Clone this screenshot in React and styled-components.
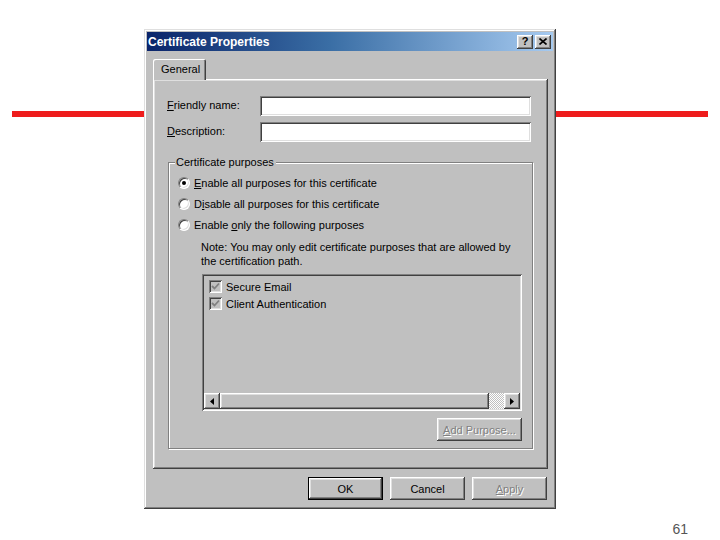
import React from "react";
import styled, { createGlobalStyle } from "styled-components";

// ===== global =====
const GlobalStyle = createGlobalStyle`
  html, body {
    margin: 0;
    padding: 0;
    background: #ffffff;
  }
  body {
    font-family: "Liberation Sans", Arial, sans-serif;
  }
`;

// ===== bevels =====
const raised = `
  box-shadow: inset -1px -1px #404040, inset 1px 1px #ffffff,
    inset -2px -2px #808080, inset 2px 2px #dfdfdf;
`;
const sunken = `
  box-shadow: inset 1px 1px #808080, inset -1px -1px #ffffff,
    inset 2px 2px #404040, inset -2px -2px #dfdfdf;
`;

// ===== slide =====
const Slide = styled.div`
  position: relative;
  width: 720px;
  height: 540px;
  overflow: hidden;
  background: #ffffff;
  display: flex;
  flex-direction: column;
`;
const RedRule = styled.div`
  position: absolute;
  top: 111px;
  left: 12px;
  width: 696px;
  height: 6px;
  background: #ee1c1c;
`;
const PageNumber = styled.div`
  align-self: flex-end;
  margin: 12px 32px 0 0;
  font-size: 14px;
  color: #555555;
`;

// ===== window =====
const Dialog = styled.div`
  position: relative;
  z-index: 1;
  box-sizing: border-box;
  margin: 29px 0 0 144px;
  width: 412px;
  height: 480px;
  padding: 3px;
  background: #c0c0c0;
  font-size: 11px;
  color: #000000;
  box-shadow: inset -1px -1px #404040, inset 1px 1px #dfdfdf,
    inset -2px -2px #808080, inset 2px 2px #ffffff;
  display: flex;
  flex-direction: column;
`;
const TitleBar = styled.div`
  height: 19px;
  padding: 0 2px 0 1px;
  display: flex;
  align-items: center;
  justify-content: space-between;
  background: linear-gradient(to right, #0a246a 0%, #3a6ea5 45%, #a6caf0 100%);
  color: #ffffff;
  font-weight: bold;
  font-size: 12px;
`;
const CaptionButtons = styled.div`
  display: flex;
  gap: 2px;
`;
const CaptionButton = styled.div`
  box-sizing: border-box;
  width: 16px;
  height: 14px;
  background: #c0c0c0;
  ${raised}
  display: flex;
  align-items: center;
  justify-content: center;
  color: #000000;
  font-weight: bold;
  font-size: 11px;
  line-height: 1;
`;
const Body = styled.div`
  flex: 1;
  padding: 8px 5px 0 6px;
  display: flex;
  flex-direction: column;
`;
const TabStrip = styled.div`
  display: flex;
  height: 20px;
`;
const Tab = styled.div`
  position: relative;
  z-index: 2;
  box-sizing: border-box;
  width: 53px;
  height: 21px;
  padding: 4px 0 0 8px;
  background: #c0c0c0;
  border-radius: 2px 2px 0 0;
  box-shadow: inset 1px 1px #ffffff, inset -1px 0 #404040, inset -2px 0 #808080;
`;
const TabPanel = styled.div`
  box-sizing: border-box;
  height: 390px;
  padding: 17px 17px 0 14px;
  background: #c0c0c0;
  ${raised}
  display: flex;
  flex-direction: column;
`;
const FieldRow = styled.div`
  display: flex;
  align-items: center;
  margin-bottom: 6px;
`;
const Label = styled.div`
  width: 93px;
  margin-top: -2px;
`;
const TextField = styled.div`
  box-sizing: border-box;
  flex: 1;
  height: 20px;
  background: #ffffff;
  ${sunken}
`;
const GroupBox = styled.fieldset`
  box-sizing: border-box;
  margin: 8px 0 0 1px;
  padding: 4px 10px 0 9px;
  height: 293px;
  border: 1px solid #808080;
  box-shadow: 1px 1px 0 #ffffff, inset 1px 1px 0 #ffffff;
  display: flex;
  flex-direction: column;
`;
const Legend = styled.legend`
  padding: 0 2px 0 1px;
  margin-left: -3px;
  background: #c0c0c0;
`;
const RadioRow = styled.div`
  display: flex;
  align-items: center;
  gap: 4px;
  height: 21px;
`;
const RadioDot = styled.div`
  box-sizing: border-box;
  width: 12px;
  height: 12px;
  border-radius: 50%;
  background: #ffffff;
  border: 1px solid;
  border-color: #808080 #ffffff #ffffff #808080;
  box-shadow: inset 1px 1px #404040, inset -1px -1px #dfdfdf;
  display: flex;
  align-items: center;
  justify-content: center;
  &::after {
    content: "";
    width: 4px;
    height: 4px;
    border-radius: 50%;
    background: ${(props) => (props.checked ? "#000000" : "transparent")};
  }
`;
const Note = styled.div`
  margin: 5px 0 0 23px;
  line-height: 14px;
`;
const ListBox = styled.div`
  box-sizing: border-box;
  margin: 6px 0 0 24px;
  width: 320px;
  height: 137px;
  padding: 4px 2px 2px 2px;
  background: #c0c0c0;
  ${sunken}
  display: flex;
  flex-direction: column;
`;
const CheckRow = styled.div`
  display: flex;
  align-items: center;
  gap: 4px;
  height: 17px;
  padding-left: 5px;
`;
const CheckBox = styled.div`
  box-sizing: border-box;
  width: 13px;
  height: 13px;
  background: #c0c0c0;
  ${sunken}
  display: flex;
  align-items: center;
  justify-content: center;
`;
const ListSpacer = styled.div`
  flex: 1;
`;
const ScrollBar = styled.div`
  display: flex;
  height: 16px;
`;
const ScrollArrow = styled.div`
  box-sizing: border-box;
  width: 16px;
  height: 16px;
  background: #c0c0c0;
  ${raised}
  display: flex;
  align-items: center;
  justify-content: center;
`;
const ScrollThumb = styled.div`
  box-sizing: border-box;
  flex: 1;
  background: #c0c0c0;
  ${raised}
`;
const ScrollTrack = styled.div`
  width: 15px;
  background-color: #c0c0c0;
  background-image: repeating-conic-gradient(#ffffff 0 25%, #c0c0c0 0 50%);
  background-size: 2px 2px;
`;
const GroupFooter = styled.div`
  display: flex;
  justify-content: flex-end;
  margin: 7px 0 0 0;
`;
const PushButton = styled.div`
  box-sizing: border-box;
  width: ${(props) => props.width || "75px"};
  height: 23px;
  background: #c0c0c0;
  display: flex;
  align-items: center;
  justify-content: center;
  color: ${(props) => (props.disabled ? "#808080" : "#000000")};
  text-shadow: ${(props) => (props.disabled ? "1px 1px 0 #ffffff" : "none")};
  ${(props) =>
    props.isDefault
      ? `border: 1px solid #000000;
         box-shadow: inset -1px -1px #404040, inset 1px 1px #ffffff,
           inset -2px -2px #808080, inset 2px 2px #dfdfdf;`
      : raised}
`;
const ButtonRow = styled.div`
  display: flex;
  justify-content: flex-end;
  gap: 7px;
  margin-top: 8px;
  padding-right: 1px;
`;

// ===== icons =====
const CloseGlyph = () => (
  <svg width="8" height="7" viewBox="0 0 8 7">
    <path d="M0.5 0.5 L7.5 6.5 M7.5 0.5 L0.5 6.5" stroke="#000" strokeWidth="1.6" />
  </svg>
);
const CheckGlyph = () => (
  <svg width="9" height="9" viewBox="0 0 9 9">
    <path d="M1 4 L3.5 6.5 L8 1.5" stroke="#808080" strokeWidth="1.8" fill="none" />
  </svg>
);
const Arrow = ({ dir }) => (
  <svg width="4" height="7" viewBox="0 0 4 7">
    <path d={dir === "left" ? "M4 0 L0 3.5 L4 7 Z" : "M0 0 L4 3.5 L0 7 Z"} fill="#000" />
  </svg>
);

// ===== component =====
const App = () => {
  const purposes = ["Secure Email", "Client Authentication"];

  return (
    <>
      <GlobalStyle />
      <Slide>
        <RedRule />
        <Dialog>
          <TitleBar>
            <span>Certificate Properties</span>
            <CaptionButtons>
              <CaptionButton>?</CaptionButton>
              <CaptionButton>
                <CloseGlyph />
              </CaptionButton>
            </CaptionButtons>
          </TitleBar>
          <Body>
            <TabStrip>
              <Tab>General</Tab>
            </TabStrip>
            <TabPanel>
              <FieldRow>
                <Label>
                  <u>F</u>riendly name:
                </Label>
                <TextField />
              </FieldRow>
              <FieldRow>
                <Label>
                  <u>D</u>escription:
                </Label>
                <TextField />
              </FieldRow>
              <GroupBox>
                <Legend>Certificate purposes</Legend>
                <RadioRow>
                  <RadioDot checked />
                  <span>
                    <u>E</u>nable all purposes for this certificate
                  </span>
                </RadioRow>
                <RadioRow>
                  <RadioDot />
                  <span>
                    D<u>i</u>sable all purposes for this certificate
                  </span>
                </RadioRow>
                <RadioRow>
                  <RadioDot />
                  <span>
                    Enable <u>o</u>nly the following purposes
                  </span>
                </RadioRow>
                <Note>
                  Note: You may only edit certificate purposes that are allowed by
                  <br />
                  the certification path.
                </Note>
                <ListBox>
                  {purposes.map((p) => (
                    <CheckRow key={p}>
                      <CheckBox>
                        <CheckGlyph />
                      </CheckBox>
                      <span>{p}</span>
                    </CheckRow>
                  ))}
                  <ListSpacer />
                  <ScrollBar>
                    <ScrollArrow>
                      <Arrow dir="left" />
                    </ScrollArrow>
                    <ScrollThumb />
                    <ScrollTrack />
                    <ScrollArrow>
                      <Arrow dir="right" />
                    </ScrollArrow>
                  </ScrollBar>
                </ListBox>
                <GroupFooter>
                  <PushButton width="85px" disabled>
                    <span>
                      <u>A</u>dd Purpose...
                    </span>
                  </PushButton>
                </GroupFooter>
              </GroupBox>
            </TabPanel>
            <ButtonRow>
              <PushButton isDefault>OK</PushButton>
              <PushButton>Cancel</PushButton>
              <PushButton disabled>
                <span>
                  <u>A</u>pply
                </span>
              </PushButton>
            </ButtonRow>
          </Body>
        </Dialog>
        <PageNumber>61</PageNumber>
      </Slide>
    </>
  );
};

export default App;
